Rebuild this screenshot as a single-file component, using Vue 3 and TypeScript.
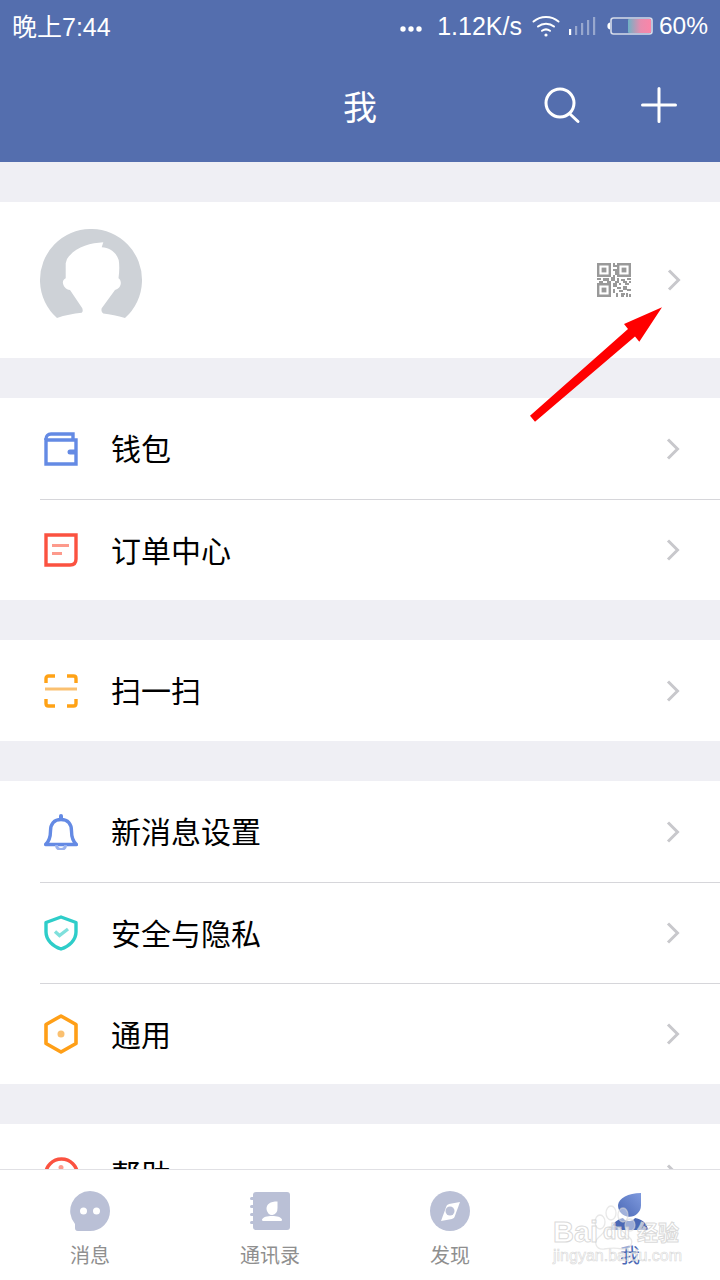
<script setup lang="ts">
interface MenuItem {
  label: string
  icon: string
}

const groups: MenuItem[][] = [
  [
    { label: '钱包', icon: 'wallet' },
    { label: '订单中心', icon: 'order' },
  ],
  [{ label: '扫一扫', icon: 'scan' }],
  [
    { label: '新消息设置', icon: 'bell' },
    { label: '安全与隐私', icon: 'shield' },
    { label: '通用', icon: 'hex' },
  ],
  [{ label: '帮助', icon: 'help' }],
]

// qr blocks on a 17x17 grid as [x, y, w, h], finder squares are drawn separately
const qrBlocks: [number, number, number, number][] = [
  [8, 0, 1, 2], [9, 1, 1, 1], [8, 3, 2, 1], [9, 4, 1, 2], [8, 6, 1, 1],
  [0, 7.5, 2, 1], [3, 7.5, 3, 1.5], [7, 7, 2, 2], [10, 7.5, 1, 2], [12, 8, 2, 1], [15, 7.5, 2, 1],
  [1, 9, 2, 1], [5, 9, 2, 1], [9, 9, 2, 1], [13, 9, 2, 1], [16, 9, 1, 1],
  [8, 10, 2, 2], [11, 10, 1, 1], [14, 10, 2, 1],
  [10, 12, 2, 1], [13, 11.500, 2, 2], [8, 13, 1, 2], [11, 13.500, 2, 1], [15, 13, 2, 1],
  [9.500, 15, 1, 2], [12, 15, 2, 1], [14.500, 15, 1, 2], [16, 15.500, 1, 1.500], [12, 16, 1.500, 1],
]
const finders: [number, number][] = [[0, 0], [10, 0], [0, 10]]
</script>

<template>
  <div class="page">
    <header class="top">
      <div class="status">
        <span class="time">晚上7:44</span>
        <div class="status-right">
          <svg class="dots" width="22" height="6" viewBox="0 0 22 6">
            <circle cx="3" cy="3" r="2.7" fill="#fff" />
            <circle cx="11" cy="3" r="2.7" fill="#fff" />
            <circle cx="19" cy="3" r="2.7" fill="#fff" />
          </svg>
          <span class="speed">1.12K/s</span>
          <svg width="28" height="22" viewBox="0 0 28 22" fill="none" stroke="#fff" stroke-width="2" stroke-linecap="round">
            <path d="M1.5 6.5C8.5 .5 19.5 .5 26.5 6.5" />
            <path d="M6 11.5C10.5 7.8 17.5 7.8 22 11.5" />
            <path d="M10 15.8C12.5 14 15.5 14 18 15.8" />
            <circle cx="14" cy="20" r="1.6" fill="#fff" stroke="none" />
          </svg>
          <svg class="signal" width="27" height="18" viewBox="0 0 27 18" fill="#fff">
            <rect x="0" y="12" width="2.2" height="6" />
            <rect x="6" y="9" width="2.2" height="9" opacity=".4" />
            <rect x="12" y="6" width="2.2" height="12" opacity=".4" />
            <rect x="18" y="3" width="2.2" height="15" opacity=".4" />
            <rect x="24" y="0" width="2.2" height="18" opacity=".4" />
          </svg>
          <svg class="battery" width="46" height="18" viewBox="0 0 46 18">
            <defs>
              <linearGradient id="batt" x1="0" y1="0" x2="1" y2="0">
                <stop offset="0" stop-color="#6fb2c6" />
                <stop offset=".55" stop-color="#e88cae" />
                <stop offset="1" stop-color="#fb85a8" />
              </linearGradient>
            </defs>
            <path d="M3 5.5C1 6 .4 7 .4 9s.6 3 2.6 3.5z" fill="#fff" />
            <rect x="4" y="1" width="41" height="16" rx="2.5" fill="none" stroke="#d5dbe9" stroke-width="1.6" />
            <rect x="21" y="2" width="23" height="14" rx="1" fill="url(#batt)" />
          </svg>
          <span class="percent">60%</span>
        </div>
      </div>
      <div class="nav">
        <span class="nav-title">我</span>
        <svg class="nav-search" width="38" height="38" viewBox="0 0 38 38" fill="none" stroke="#fff" stroke-width="3" stroke-linecap="round">
          <circle cx="17" cy="17" r="14" />
          <path d="M27 28L35 35.5" />
        </svg>
        <svg class="nav-plus" width="36" height="36" viewBox="0 0 36 36" fill="none" stroke="#fff" stroke-width="3" stroke-linecap="round">
          <path d="M18 1.5V34.5M1.5 18H34.5" />
        </svg>
      </div>
    </header>

    <section class="card profile">
      <svg class="avatar" width="102" height="102" viewBox="0 0 102 102">
        <path
          fill="#ced2d7"
          d="M17 89A51 51 0 1 1 85 89C78 86.500 70 85.200 63.300 84.400C61.800 83.400 61 81.500 61.700 79.300L75 61C78.500 60.500 81 57 80.800 53.700C80.600 51.500 80 50 78.500 49.300C79.500 42 79.500 36 78.700 31C76 23 70 19 61.700 18.300L63.300 13.300C50 14 35 18 27 30L25.700 34.300V49.300C23.800 50 22.700 52 22.900 53.700C23.200 57 26 60.500 30 61L42.300 79.300C43 81.500 42.800 83.200 41.700 83.700C33 84.700 25 86 17 89z"
        />
      </svg>
      <div class="profile-right">
        <svg class="qr" width="34" height="34" viewBox="0 0 17 17" fill="#999">
          <g v-for="(f, i) in finders" :key="i">
            <path :d="`M${f[0]} ${f[1]}h7v7h-7zM${f[0] + 1.2} ${f[1] + 1.2}v4.600h4.600v-4.600z`" fill-rule="evenodd" />
            <rect :x="f[0] + 2.3" :y="f[1] + 2.3" width="2.4" height="2.4" />
          </g>
          <rect v-for="(b, i) in qrBlocks" :key="'b' + i" :x="b[0]" :y="b[1]" :width="b[2]" :height="b[3]" />
        </svg>
        <svg class="chev" width="14" height="22" viewBox="0 0 14 22" fill="none" stroke="#c8c8cc" stroke-width="3">
          <path d="M2 1.500L11.500 11 2 20.500" />
        </svg>
      </div>
    </section>

    <section v-for="(group, g) in groups" :key="g" class="card">
      <div v-for="item in group" :key="item.label" class="row">
        <div class="row-icon">
          <svg v-if="item.icon === 'wallet'" width="34" height="34" viewBox="0 0 34 34" fill="none" stroke="#648ae4" stroke-width="3.4">
            <path d="M2 8V7C2 4 4 2 7 2H29V8" />
            <path d="M2 8H32V32H2z" />
            <path d="M26 17.500H32V22.500H26a2.500 2.500 0 0 1 0-5z" fill="#648ae4" stroke="none" />
          </svg>
          <svg v-else-if="item.icon === 'order'" width="34" height="34" viewBox="0 0 34 34" fill="none" stroke-width="3.4">
            <path d="M2 2H32V26C32 30 30 32 26 32H2z" stroke="#fb5240" />
            <path d="M8 12.500H25M8 20.500H18" stroke="#fd9a8c" stroke-width="3" />
          </svg>
          <svg v-else-if="item.icon === 'scan'" width="34" height="34" viewBox="0 0 34 34" fill="none" stroke-width="3.4">
            <path d="M2 9V4.500C2 3 3 2 4.500 2H11M23 2H29.500C31 2 32 3 32 4.500V9M2 25V29.500C2 31 3 32 4.500 32H11M23 32H29.500C31 32 32 31 32 29.500V25" stroke="#ffa216" />
            <path d="M1 15H33" stroke="#fac070" stroke-width="3" />
          </svg>
          <svg v-else-if="item.icon === 'bell'" width="34" height="36" viewBox="0 0 34 36" fill="none" stroke="#648ae4" stroke-width="3.4">
            <path d="M1.500 30.500H32.500C28.500 27 27.500 23 27.500 17C27.500 10 24 5.500 17 5.500S6.500 10 6.500 17C6.500 23 5.500 27 1.500 30.500z" stroke-linejoin="round" />
            <path d="M17 5V2" stroke-linecap="round" stroke-width="4" />
            <path d="M12.500 31C12.500 37 21.500 37 21.500 31" stroke="#9ab2ee" stroke-width="3" />
          </svg>
          <svg v-else-if="item.icon === 'shield'" width="34" height="36" viewBox="0 0 34 36" fill="none" stroke-width="3.4">
            <path d="M17 2L32 7.500V17C32 25 25 31.500 17 34C9 31.500 2 25 2 17V7.500z" stroke="#2ecdc9" stroke-linejoin="round" />
            <path d="M11 16.500L15.500 20.500L24 14" stroke="#7fe0dc" />
          </svg>
          <svg v-else-if="item.icon === 'hex'" width="34" height="40" viewBox="0 0 34 40" fill="none">
            <path d="M17 2L32 10.500V29.500L17 38L2 29.500V10.500z" stroke="#ff9f17" stroke-width="3.6" stroke-linejoin="round" />
            <circle cx="17" cy="20" r="3.500" fill="#fac070" />
          </svg>
          <svg v-else width="35" height="36" viewBox="0 0 35 36" fill="none">
            <circle cx="17.500" cy="18" r="16" stroke="#fb5240" stroke-width="3.4" />
            <circle cx="17" cy="10.500" r="2.500" fill="#fd9a8c" />
          </svg>
        </div>
        <div class="row-main">
          <span class="row-label">{{ item.label }}</span>
          <svg class="chev" width="14" height="22" viewBox="0 0 14 22" fill="none" stroke="#c8c8cc" stroke-width="3">
            <path d="M2 1.500L11.500 11 2 20.500" />
          </svg>
        </div>
      </div>
    </section>

    <svg class="arrow" width="134" height="116" viewBox="0 0 134 116">
      <path fill="#f00" d="M132 1.300L109.300 35.700 105 30.500 5 115.700 0 109.700 98 23 94 18z" />
    </svg>

    <nav class="tabs">
      <div class="tab">
        <svg width="40" height="40" viewBox="0 0 40 40">
          <path fill="#bac0d6" d="M20 0a20 20 0 1 1 0 40H8C5.500 40 5 38.500 5 36.500V33A20 20 0 0 1 20 0z" />
          <circle cx="13.500" cy="20" r="3.500" fill="#fff" />
          <circle cx="26.500" cy="20" r="3.500" fill="#fff" />
        </svg>
        <span>消息</span>
      </div>
      <div class="tab">
        <svg width="40" height="40" viewBox="0 0 40 40">
          <rect x="3" y="1" width="37" height="38" rx="3" fill="#bac0d6" />
          <g fill="#bac0d6">
            <rect x="0" y="6" width="5" height="3" rx="1.500" />
            <rect x="0" y="14" width="5" height="3" rx="1.500" />
            <rect x="0" y="22" width="5" height="3" rx="1.500" />
            <rect x="0" y="30" width="5" height="3" rx="1.500" />
          </g>
          <path fill="#fff" d="M27.500 10.500V17A5.500 6.500 0 0 1 16.500 18C16.500 13 20 10.500 27.500 10.500z" />
          <path fill="#fff" d="M12 28.500C13 26 17 25 22 25S31 26 32 28.500C32 29.500 31.500 30 30.500 30H13.500C12.500 30 12 29.500 12 28.500z" />
        </svg>
        <span>通讯录</span>
      </div>
      <div class="tab">
        <svg width="40" height="40" viewBox="0 0 40 40">
          <circle cx="20" cy="20" r="20" fill="#bac0d6" />
          <path fill="#fff" d="M30 11L24.500 26C24 27 23 27.500 22 28L11 30L16.500 15C17 14 18 13.500 19 13z" />
          <circle cx="20" cy="20" r="4.500" fill="#bac0d6" />
        </svg>
        <span>发现</span>
      </div>
      <div class="tab active">
        <svg width="40" height="40" viewBox="0 0 40 40">
          <defs>
            <linearGradient id="me" x1="1" y1="0" x2="0" y2="1">
              <stop offset="0" stop-color="#7f9ade" />
              <stop offset="1" stop-color="#4a68b5" />
            </linearGradient>
          </defs>
          <path fill="url(#me)" d="M31 2V14.500A11.500 11.500 0 1 1 8 14C9 7 18 2 31 2z" />
          <path fill="#4a68b5" d="M1 39C2 32 8 28 13 27C15 31 23 31 25 27C31 28 37 31 38 39z" />
        </svg>
        <span>我</span>
      </div>
    </nav>

    <div class="watermark">
      <svg class="wm-paw" width="58" height="46" viewBox="0 0 58 46" fill="#fff" fill-opacity=".45" stroke="#d8d8d8" stroke-opacity=".6" stroke-width="1.300">
        <ellipse cx="8" cy="17" rx="5" ry="7" />
        <ellipse cx="19" cy="8" rx="5" ry="7" />
        <ellipse cx="31" cy="10" rx="5" ry="7" />
        <ellipse cx="38" cy="20" rx="5" ry="6" />
        <path d="M21 21C28 21 31 28 37 32C43 37 38 45 30 44C25 43 18 43 12 44C4 45 1 37 7 32C12 28 15 21 21 21z" />
      </svg>
      <div class="wm-top">
        <span class="wm-bai">Bai</span>
        <span class="wm-du">du</span>
        <span class="wm-cn">经验</span>
      </div>
      <span class="wm-url">jingyan.baidu.com</span>
    </div>
  </div>
</template>

<style>
html,
body {
  margin: 0;
  background: #efeff4;
}
</style>

<style scoped>
.page {
  position: relative;
  width: 720px;
  height: 1280px;
  overflow: hidden;
  background: #efeff4;
  font-family: "Liberation Sans", "Noto Sans CJK SC", sans-serif;
}
.top {
  height: 162px;
  margin-bottom: 40px;
  background: #546eae;
  color: #fff;
}
.status {
  height: 52px;
  padding: 0 12px;
  display: flex;
  align-items: center;
  justify-content: space-between;
  box-sizing: border-box;
}
.time {
  font-size: 25px;
  margin-bottom: 3px;
}
.status-right {
  display: flex;
  align-items: center;
}
.dots {
  margin: 5px 15px 0 0;
}
.speed {
  font-size: 25px;
  margin-right: 10px;
}
.signal {
  margin: 0 11px 0 9px;
}
.battery {
  margin-right: 6px;
}
.percent {
  font-size: 24.5px;
}
.nav {
  height: 110px;
  display: flex;
  align-items: center;
  padding: 0 43px 4px 0;
  box-sizing: border-box;
  position: relative;
}
.nav-title {
  text-align: center;
  font-size: 34px;
  position: absolute;
  left: 0;
  right: 0;
}
.nav-search {
  margin-left: auto;
  margin-right: 60px;
  z-index: 1;
}
.nav-plus {
  z-index: 1;
}
.card {
  background: #fff;
  margin-bottom: 40px;
}
.profile {
  height: 156px;
  padding: 0 40px;
  display: flex;
  align-items: center;
  justify-content: space-between;
}
.profile-right {
  display: flex;
  align-items: center;
  gap: 36px;
  margin-right: -1px;
}
.qr {
  display: block;
}
.row {
  display: flex;
  height: 101px;
}
.row-icon {
  width: 72px;
  margin-left: 40px;
  flex: none;
  display: flex;
  align-items: center;
  box-sizing: border-box;
}
.row-icon svg {
  display: block;
  margin-left: 4px;
}
.row-main {
  flex: 1;
  display: flex;
  align-items: center;
  justify-content: space-between;
  padding-right: 40px;
  font-size: 30px;
  color: #000;
}
.row-label {
  margin: 0 0 3px -1px;
}
.row + .row .row-main,
.row + .row .row-icon {
  border-top: 1px solid #d6d6da;
}
.chev {
  display: block;
}
.arrow {
  position: absolute;
  left: 530px;
  top: 306px;
}
.tabs {
  position: absolute;
  left: 0;
  right: 0;
  bottom: 0;
  height: 111px;
  box-sizing: border-box;
  border-top: 1px solid #e0e0e4;
  background: #fff;
  display: grid;
  grid-template-columns: repeat(4, 1fr);
}
.tab {
  display: flex;
  flex-direction: column;
  align-items: center;
  padding-top: 21px;
  gap: 11px;
  font-size: 20px;
  color: #8f8f8f;
  line-height: 28px;
}
.tab svg {
  display: block;
}
.tab.active {
  color: #4a68b5;
}
.watermark {
  position: absolute;
  left: 553px;
  top: 1222px;
  width: 128px;
  display: flex;
  flex-direction: column;
  gap: 6px;
  line-height: 1;
  white-space: nowrap;
  color: rgba(255, 255, 255, 0.6);
  -webkit-text-stroke: 1px rgba(205, 205, 205, 0.75);
}
.wm-paw {
  position: absolute;
  left: 39px;
  top: -17px;
}
.wm-top {
  position: relative;
  display: flex;
  align-items: center;
  height: 20px;
  font-weight: 700;
}
.wm-bai {
  font-size: 29px;
  width: 50px;
}
.wm-du {
  font-size: 22px;
  width: 34px;
}
.wm-cn {
  font-size: 21px;
}
.wm-url {
  font-size: 16px;
  -webkit-text-stroke: 0.6px rgba(205, 205, 205, 0.8);
}
</style>
